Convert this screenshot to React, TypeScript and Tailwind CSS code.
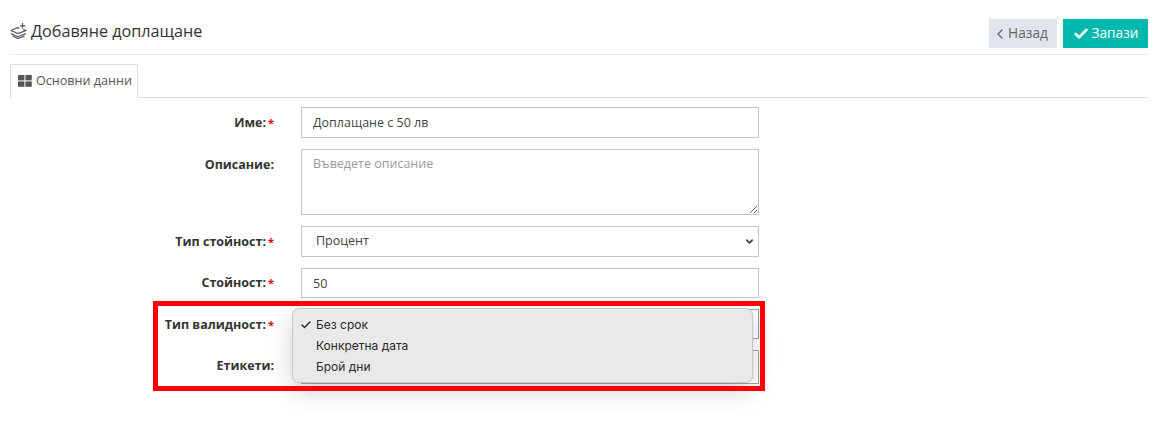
import React from "react";
import { Check, ChevronLeft, ChevronDown } from "lucide-react";

const Label = ({ text, required, low }: { text: string; required?: boolean; low?: boolean }) => (
  <div className={`w-[264px] shrink-0 text-right text-[12.5px] leading-[18px] font-bold text-[#333] ${low ? "pt-[2px]" : ""}`}>
    {text}
    {required && <span className="text-[#e8000b] ml-[2px] text-[11px]">*</span>}
  </div>
);

const StackIcon = () => (
  <svg width="17" height="18" viewBox="0 0 17 18" fill="none" stroke="#555" strokeWidth="1.2">
    <path d="M0.8 8.5 L7.5 5.6 L9.5 6.4" />
    <path d="M0.8 8.5 L8 11.6 L15.8 8.5 L13.2 7.3" />
    <path d="M0.8 11.6 L8 14.7 L15.8 11.6" />
    <path d="M2.5 14 L8 16.6 L14.5 14" />
    <path d="M12.5 1 V6.5 M9.8 3.8 H15.4" />
  </svg>
);

export default function App() {
  return (
    <div className="w-[1159px] h-[424px] relative overflow-hidden bg-white font-['Open_Sans',sans-serif] text-[#444]">
      <div className="pl-[10px] pr-[11px]">
        {/* Header */}
        <div className="h-[55px] pt-[19px] flex justify-between border-b border-[#e9e9e9]">
          <div className="flex items-center h-[24px] gap-[4px]">
            <StackIcon />
            <h1 className="text-[16.2px] leading-[24px] text-[#333] font-normal">Добавяне доплащане</h1>
          </div>
          <div className="flex gap-[6px] h-[29px]">
            <button className="w-[68px] bg-[#e0e4ec] text-[#666] text-[13.7px] flex items-center justify-center">
              <ChevronLeft size={16} strokeWidth={2} className="-ml-[6px]" />
              Назад
            </button>
            <button className="w-[85px] bg-[#00b8ad] text-white text-[13.7px] flex items-center justify-center gap-[3px]">
              <Check size={16} strokeWidth={4} />
              Запази
            </button>
          </div>
        </div>

        {/* Tabs */}
        <div className="mt-[9px] h-[34px] border-b border-[#ddd] flex">
          <div className="w-[128px] h-[34px] bg-white border border-b-0 border-[#ddd] flex items-center pl-[7px] gap-[4px] text-[12.6px] text-[#555]">
            <svg width="14" height="12" viewBox="0 0 14 12" fill="#555" className="-mt-[2px]">
              <rect x="0" y="0" width="6.4" height="5.4" />
              <rect x="7.4" y="0" width="6.4" height="5.4" />
              <rect x="0" y="6.4" width="6.4" height="5.4" />
              <rect x="7.4" y="6.4" width="6.4" height="5.4" />
            </svg>
            Основни данни
          </div>
        </div>

        {/* Form */}
        <div className="mt-[9px] flex flex-col text-[12.5px]">
          <div className="flex items-center h-[31px] gap-[27px]">
            <Label text="Име:" required />
            <input
              readOnly
              value="Доплащане с 50 лв"
              className="w-[458px] h-[31px] border border-[#bcc8d8] px-[11px] text-[#444] outline-none"
            />
          </div>

          <div className="flex mt-[11px] h-[66px] gap-[27px]">
            <div className="pt-[7px]">
              <Label text="Описание:" />
            </div>
            <textarea
              readOnly
              placeholder="Въведете описание"
              className="w-[458px] h-[66px] border border-[#bcc8d8] px-[11px] py-[5px] text-[#444] placeholder:text-[#999] outline-none"
            />
          </div>

          <div className="flex items-center mt-[11px] h-[31px] gap-[27px]">
            <Label text="Тип стойност:" required />
            <div className="w-[458px] h-[31px] border border-[#bcc8d8] pl-[14px] pr-[3px] flex items-center justify-between">
              <span>Процент</span>
              <ChevronDown size={11} strokeWidth={4} className="text-[#444]" />
            </div>
          </div>

          <div className="flex items-center mt-[11px] h-[30px] gap-[27px]">
            <Label text="Стойност:" required />
            <input
              readOnly
              value="50"
              className="w-[458px] h-[30px] border border-[#bcc8d8] px-[11px] text-[#444] outline-none"
            />
          </div>

          <div className="flex items-center mt-[11px] h-[30px] gap-[27px]">
            <Label text="Тип валидност:" required low />
            <div className="w-[458px] h-[30px] border border-[#8d9cc0] pr-[3px] flex items-center justify-end">
              <ChevronDown size={11} strokeWidth={4} className="text-[#444]" />
            </div>
          </div>

          <div className="flex items-center mt-[11px] h-[30px] gap-[27px]">
            <Label text="Етикети:" low />
            <div className="w-[458px] h-[34px] self-start border border-[#a8a8a8]" />
          </div>
        </div>
      </div>

      {/* Open select menu */}
      <div className="absolute left-[292px] top-[308px] w-[461px] h-[75px] rounded-[7px] bg-[#e9e9e9] border border-[#c4c8c8] shadow-[0_8px_24px_rgba(0,0,0,0.18)] pt-[5px] font-['Inter',sans-serif] text-[12px] text-[#2a2a2a]">
        <div className="h-[21px] flex items-center pl-[7px]">
          <Check size={12} strokeWidth={3} className="mr-[4px]" />
          Без срок
        </div>
        <div className="h-[21px] flex items-center pl-[23px]">Конкретна дата</div>
        <div className="h-[21px] flex items-center pl-[23px]">Брой дни</div>
      </div>

      {/* Highlight frame */}
      <div className="absolute left-[153px] top-[301px] w-[612px] h-[90px] border-[5px] border-[#ff0000] pointer-events-none" />
    </div>
  );
}
